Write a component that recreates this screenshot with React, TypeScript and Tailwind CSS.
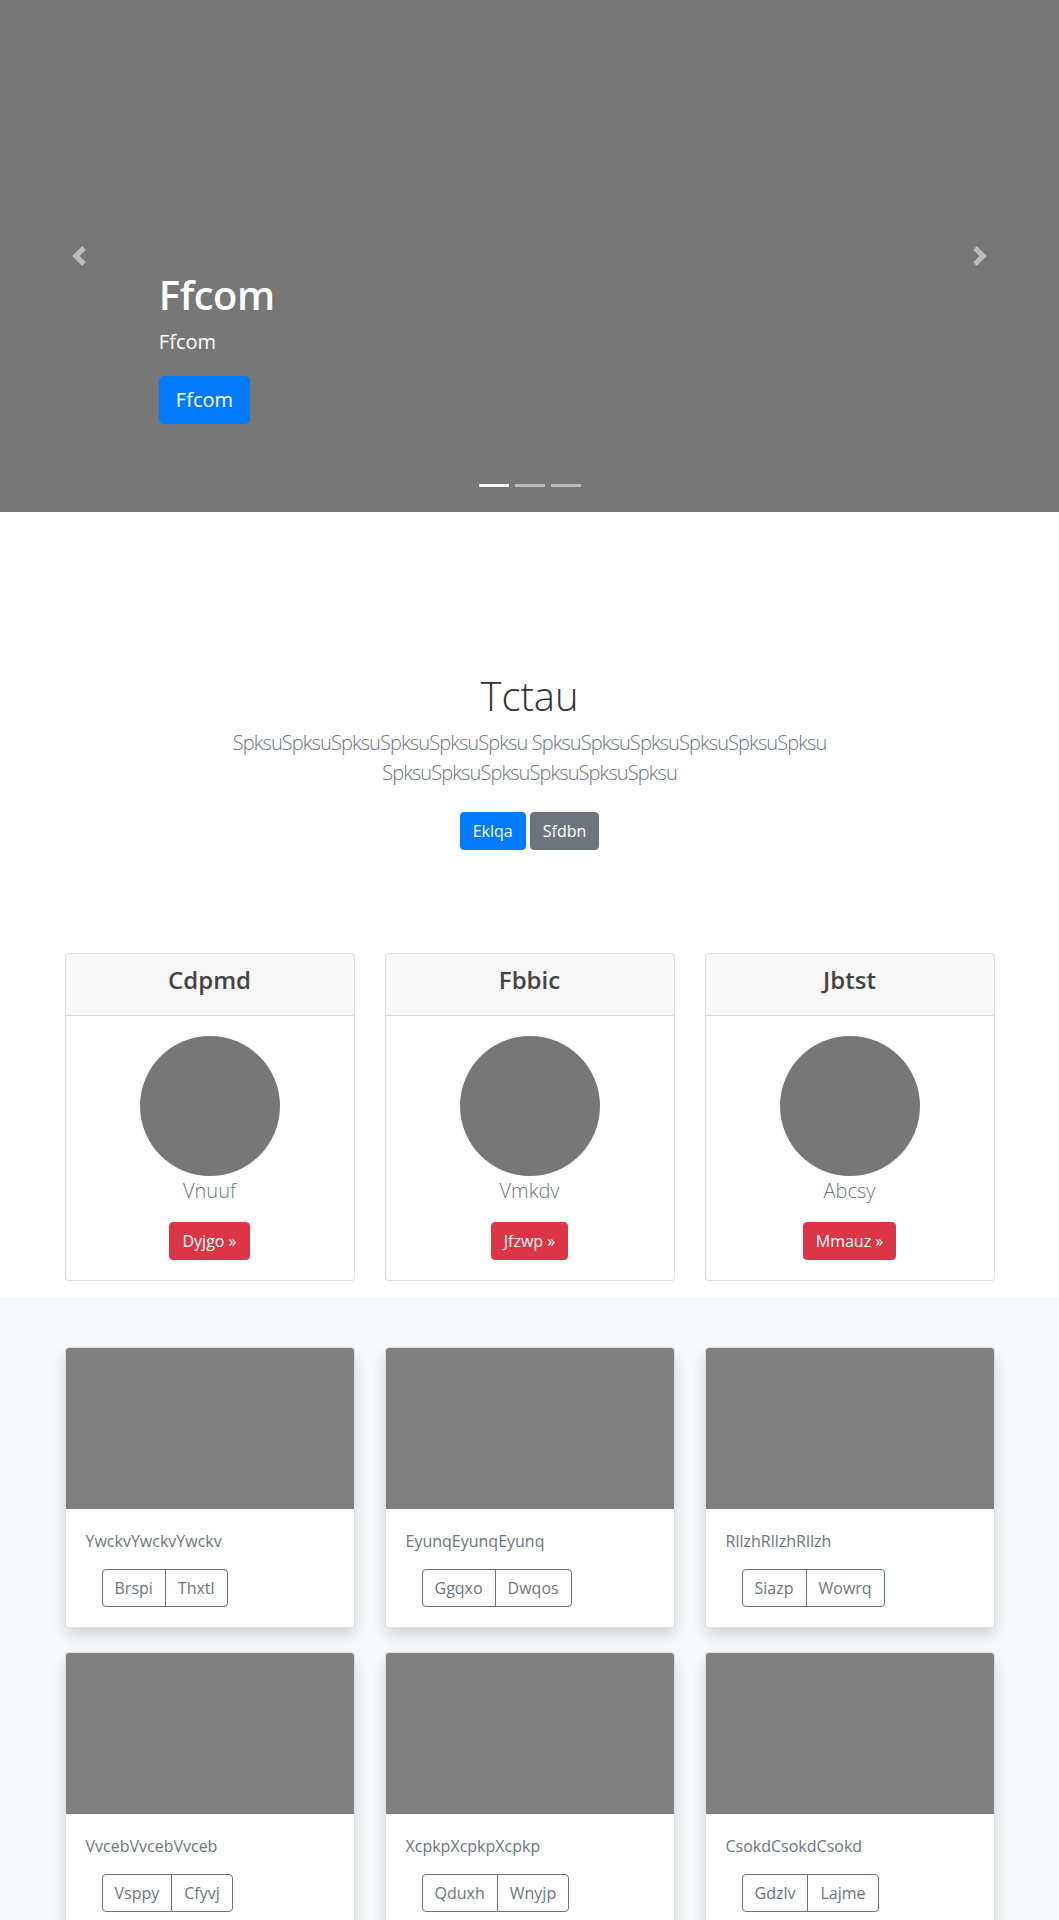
import React from 'react';

const pricing = [
  { title: 'Cdpmd', name: 'Vnuuf', action: 'Dyjgo »' },
  { title: 'Fbbic', name: 'Vmkdv', action: 'Jfzwp »' },
  { title: 'Jbtst', name: 'Abcsy', action: 'Mmauz »' },
];

const album = [
  { text: 'YwckvYwckvYwckv', buttons: ['Brspi', 'Thxtl'] },
  { text: 'EyunqEyunqEyunq', buttons: ['Ggqxo', 'Dwqos'] },
  { text: 'RllzhRllzhRllzh', buttons: ['Siazp', 'Wowrq'] },
  { text: 'VvcebVvcebVvceb', buttons: ['Vsppy', 'Cfyvj'] },
  { text: 'XcpkpXcpkpXcpkp', buttons: ['Qduxh', 'Wnyjp'] },
  { text: 'CsokdCsokdCsokd', buttons: ['Gdzlv', 'Lajme'] },
];

// bootstrap-style carousel chevrons
const Chevron: React.FC<{ dir: 'prev' | 'next' }> = ({ dir }) => (
  <svg width="20" height="20" viewBox="0 0 8 8" fill="#fff" className="opacity-50">
    {dir === 'prev' ? (
      <path d="M5.25 0l-4 4 4 4 1.5-1.5-2.5-2.5 2.5-2.5-1.5-1.5z" />
    ) : (
      <path d="M2.75 0l-1.5 1.5 2.5 2.5-2.5 2.5 1.5 1.5 4-4-4-4z" />
    )}
  </svg>
);

export default function App() {
  return (
    <div className="min-h-[1920px] bg-white font-['Open_Sans','Noto_Sans',sans-serif] text-[#212529]">
      {/* Carousel */}
      <div className="relative h-[512px] overflow-hidden bg-[#777]">
        <div className="flex h-full flex-col justify-end px-[15%] pb-[88px] text-white">
          <h1 className="mb-2 text-[40px] font-semibold leading-[48px] tracking-[-0.5px]">Ffcom</h1>
          <p className="mb-[19px] text-[20px] leading-[30px]">Ffcom</p>
          <div>
            <a className="inline-block rounded-[5px] border border-[#007bff] bg-[#007bff] px-4 py-2 text-[20px] leading-[30px] text-white">
              Ffcom
            </a>
          </div>
        </div>

        <div className="absolute left-0 top-0 flex h-full w-[15%] items-center justify-center">
          <Chevron dir="prev" />
        </div>
        <div className="absolute right-0 top-0 flex h-full w-[15%] items-center justify-center">
          <Chevron dir="next" />
        </div>

        <div className="absolute bottom-[25px] left-0 right-0 flex justify-center gap-[6px]">
          <span className="h-[3px] w-[30px] bg-white" />
          <span className="h-[3px] w-[30px] bg-white/50" />
          <span className="h-[3px] w-[30px] bg-white/50" />
        </div>
      </div>

      {/* Jumbotron */}
      <section className="pt-[160px] text-center">
        <div className="mx-auto max-w-[670px] px-[15px]">
          <h1 className="mb-2 text-[40px] font-light leading-[48px] text-[#333]">Tctau</h1>
          <p className="text-[20px] font-light leading-[30px] tracking-[-0.9px] text-[#6c757d]">
            SpksuSpksuSpksuSpksuSpksuSpksu SpksuSpksuSpksuSpksuSpksuSpksu SpksuSpksuSpksuSpksuSpksuSpksu
          </p>
          <div className="mt-6 flex justify-center gap-1">
            <a className="rounded border border-[#007bff] bg-[#007bff] px-3 py-1.5 text-base leading-6 text-white">Eklqa</a>
            <a className="rounded border border-[#6c757d] bg-[#6c757d] px-3 py-1.5 text-base leading-6 text-white">Sfdbn</a>
          </div>
        </div>
      </section>

      {/* Pricing cards */}
      <div className="mx-auto mt-[103px] grid w-[930px] grid-cols-3 gap-[30px] pb-4">
        {pricing.map((p) => (
          <div key={p.title} className="overflow-hidden rounded border border-black/[0.125] bg-white">
            <div className="border-b border-black/[0.125] bg-black/[0.03] px-5 py-3 text-center">
              <h4 className="mb-2 text-[24px] font-semibold leading-[28.8px] text-[#444]">{p.title}</h4>
            </div>
            <div className="flex flex-col items-center p-5">
              <div className="h-[140px] w-[140px] rounded-full bg-[#777]" />
              <p className="mb-4 text-[20px] font-light leading-[30px] text-[#6c757d]">{p.name}</p>
              <a className="rounded border border-[#dc3545] bg-[#dc3545] px-3 py-1.5 text-base leading-6 text-white">
                {p.action}
              </a>
            </div>
          </div>
        ))}
      </div>

      {/* Album */}
      <div className="bg-[#f8f9fa] pb-12 pt-[50px]">
        <div className="mx-auto grid w-[930px] grid-cols-3 gap-x-[30px]">
          {album.map((a) => (
            <div
              key={a.text}
              className="mb-6 overflow-hidden rounded border border-black/[0.125] bg-white shadow-[0_0.5rem_1rem_rgba(0,0,0,0.15)]"
            >
              <div className="h-[161px] w-full bg-[#808080]" />
              <div className="p-5">
                <p className="mb-4 text-base leading-6 text-[#6c757d]">{a.text}</p>
                <div className="ml-4 inline-flex">
                  <button className="rounded-l border border-[#6c757d] px-3 py-1.5 text-base leading-6 text-[#6c757d]">
                    {a.buttons[0]}
                  </button>
                  <button className="-ml-px rounded-r border border-[#6c757d] px-3 py-1.5 text-base leading-6 text-[#6c757d]">
                    {a.buttons[1]}
                  </button>
                </div>
              </div>
            </div>
          ))}
        </div>
      </div>
    </div>
  );
}
